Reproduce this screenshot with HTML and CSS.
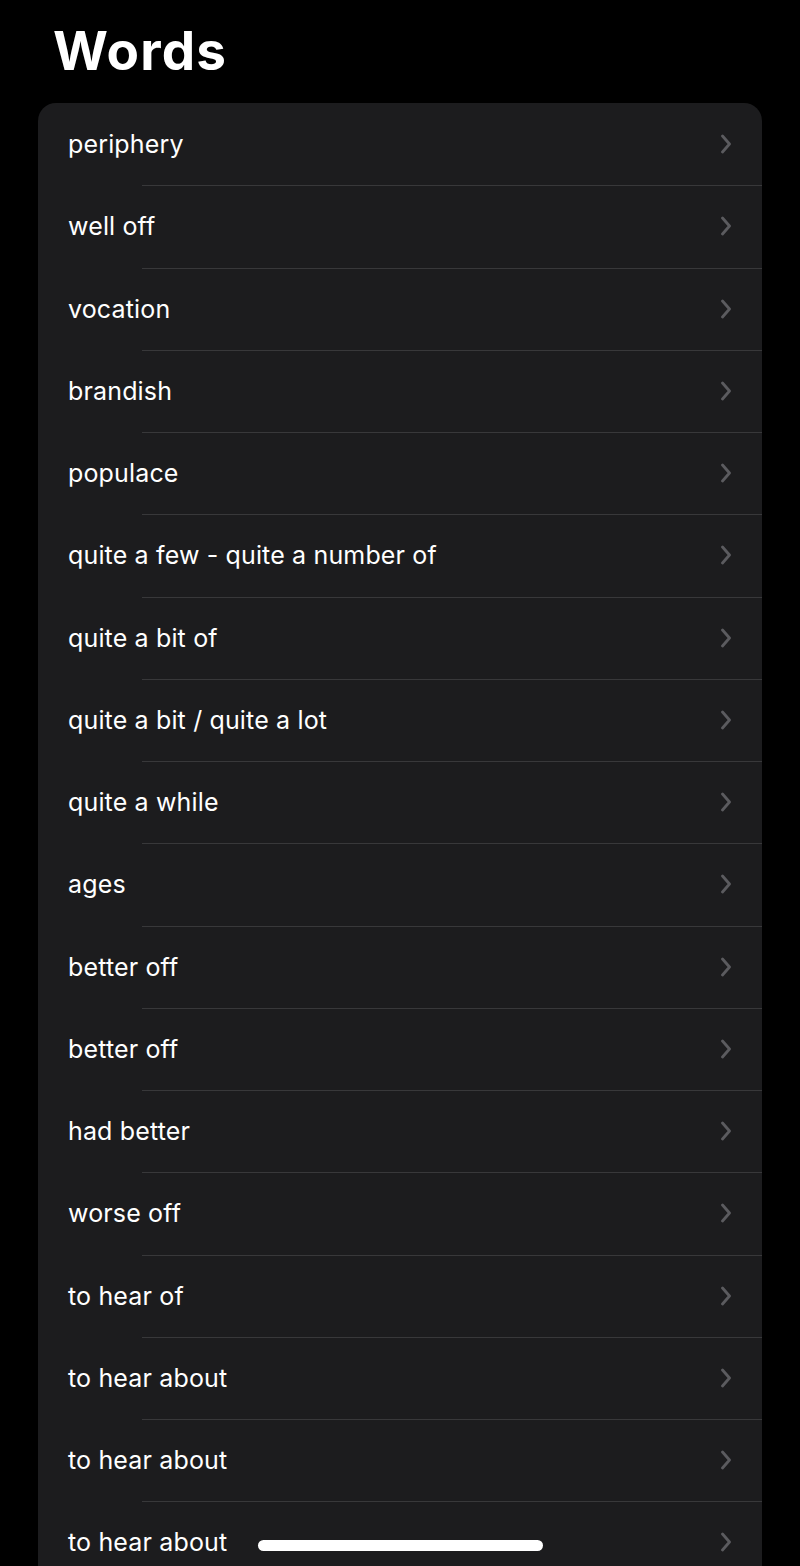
FILE: index.html
```html
<!DOCTYPE html>
<html>
<head>
<meta charset="utf-8">
<link rel="stylesheet" href="styles.css">
</head>
<body>
<div class="page">
  <h1 class="title">Words</h1>
  <ul class="list">
    <li class="row"><span class="label">periphery</span><svg class="chev" viewBox="0 0 10 20"><path d="M1.5 2 L8.5 10 L1.5 18"/></svg></li>
    <li class="row"><span class="label">well off</span><svg class="chev" viewBox="0 0 10 20"><path d="M1.5 2 L8.5 10 L1.5 18"/></svg></li>
    <li class="row"><span class="label">vocation</span><svg class="chev" viewBox="0 0 10 20"><path d="M1.5 2 L8.5 10 L1.5 18"/></svg></li>
    <li class="row"><span class="label">brandish</span><svg class="chev" viewBox="0 0 10 20"><path d="M1.5 2 L8.5 10 L1.5 18"/></svg></li>
    <li class="row"><span class="label">populace</span><svg class="chev" viewBox="0 0 10 20"><path d="M1.5 2 L8.5 10 L1.5 18"/></svg></li>
    <li class="row"><span class="label">quite a few - quite a number of</span><svg class="chev" viewBox="0 0 10 20"><path d="M1.5 2 L8.5 10 L1.5 18"/></svg></li>
    <li class="row"><span class="label">quite a bit of</span><svg class="chev" viewBox="0 0 10 20"><path d="M1.5 2 L8.5 10 L1.5 18"/></svg></li>
    <li class="row"><span class="label">quite a bit / quite a lot</span><svg class="chev" viewBox="0 0 10 20"><path d="M1.5 2 L8.5 10 L1.5 18"/></svg></li>
    <li class="row"><span class="label">quite a while</span><svg class="chev" viewBox="0 0 10 20"><path d="M1.5 2 L8.5 10 L1.5 18"/></svg></li>
    <li class="row"><span class="label">ages</span><svg class="chev" viewBox="0 0 10 20"><path d="M1.5 2 L8.5 10 L1.5 18"/></svg></li>
    <li class="row"><span class="label">better off</span><svg class="chev" viewBox="0 0 10 20"><path d="M1.5 2 L8.5 10 L1.5 18"/></svg></li>
    <li class="row"><span class="label">better off</span><svg class="chev" viewBox="0 0 10 20"><path d="M1.5 2 L8.5 10 L1.5 18"/></svg></li>
    <li class="row"><span class="label">had better</span><svg class="chev" viewBox="0 0 10 20"><path d="M1.5 2 L8.5 10 L1.5 18"/></svg></li>
    <li class="row"><span class="label">worse off</span><svg class="chev" viewBox="0 0 10 20"><path d="M1.5 2 L8.5 10 L1.5 18"/></svg></li>
    <li class="row"><span class="label">to hear of</span><svg class="chev" viewBox="0 0 10 20"><path d="M1.5 2 L8.5 10 L1.5 18"/></svg></li>
    <li class="row"><span class="label">to hear about</span><svg class="chev" viewBox="0 0 10 20"><path d="M1.5 2 L8.5 10 L1.5 18"/></svg></li>
    <li class="row"><span class="label">to hear about</span><svg class="chev" viewBox="0 0 10 20"><path d="M1.5 2 L8.5 10 L1.5 18"/></svg></li>
    <li class="row"><span class="label">to hear about</span><svg class="chev" viewBox="0 0 10 20"><path d="M1.5 2 L8.5 10 L1.5 18"/></svg></li>
  </ul>
</div>
<div class="home-indicator"></div>
</body>
</html>
```
FILE: styles.css
```css
html, body {
  margin: 0;
  padding: 0;
  background: #000;
}
body {
  width: 800px;
  height: 1566px;
  overflow: hidden;
  position: relative;
  font-family: Inter, "Liberation Sans", sans-serif;
  color: #fff;
}
.page {
  padding: 0 38px;
}
.title {
  margin: 0;
  padding: 18px 0 0 15px;
  height: 103px;
  box-sizing: border-box;
  font-size: 53px;
  font-weight: 700;
  line-height: 66px;
  letter-spacing: 1.2px;
}
.list {
  list-style: none;
  margin: 0;
  padding: 0;
  background: #1c1c1e;
  border-radius: 18px 18px 0 0;
}
.row {
  position: relative;
  height: 82.25px;
  display: flex;
  align-items: center;
  padding: 0 30px 0 30px;
  box-sizing: border-box;
}
.row + .row::before {
  content: "";
  position: absolute;
  top: 0;
  left: 104px;
  right: 0;
  height: 1px;
  background: #38383a;
}
.label {
  flex: 1;
  font-size: 25px;
  letter-spacing: 0.15px;
  line-height: 30px;
}
.chev {
  width: 10px;
  height: 20px;
  fill: none;
  stroke: #5b5b5f;
  stroke-width: 2.8;
  stroke-linecap: round;
  stroke-linejoin: round;
  margin-right: 1px;
}
.home-indicator {
  position: absolute;
  left: 258px;
  top: 1540px;
  width: 285px;
  height: 11px;
  border-radius: 6px;
  background: #fff;
}
```
